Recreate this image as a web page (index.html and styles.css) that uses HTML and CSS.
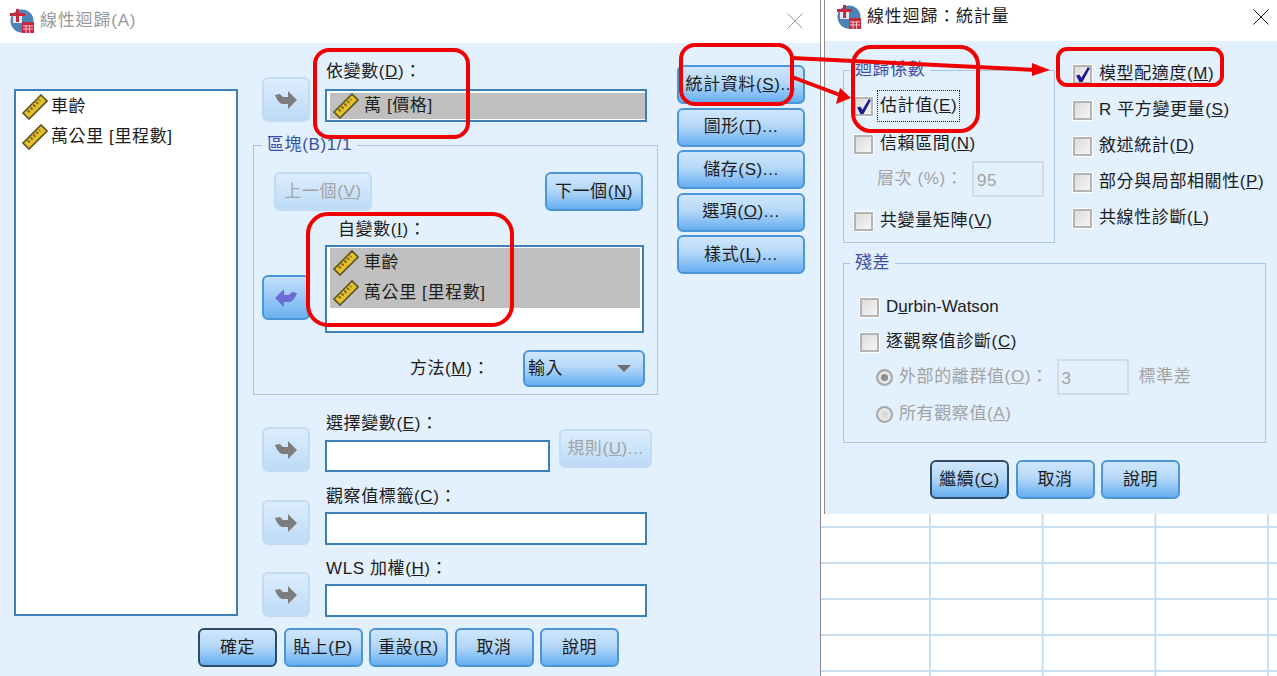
FILE: index.html
```html
<!DOCTYPE html>
<html lang="zh-Hant">
  <head>
    <meta charset="UTF-8" />
    <meta name="viewport" content="width=device-width, initial-scale=1.0" />
    <title>線性迴歸</title>
    <link rel="stylesheet" href="styles.css">
  </head>
  <body>
    <svg class="defs" aria-hidden="true">
      <symbol id="ruler" viewBox="0 0 26 26">
        <polygon points="1,19 19,1 25,7 7,25" fill="#e6c12e" stroke="#5c5220" stroke-width="1.6" />
        <line x1="6" y1="18" x2="18" y2="6" stroke="#7a6a1c" stroke-width="3" stroke-dasharray="2 2" />
      </symbol>
      <symbol id="arrow" viewBox="0 0 22 18">
        <path d="M0 4 L5 3 L8 6 H13 V0 L22 9 L13 18 V13 H7 Q3 12 0 4Z" />
      </symbol>
      <symbol id="logo" viewBox="0 0 24 24">
        <circle cx="12" cy="12" r="11.5" fill="#4a84b8" />
        <path d="M3 6 H12 V14 H3Z" fill="#dfe9f3" />
        <path d="M6 0 H9 V4 H15 V7 H9 V13 H6 V7 H0 V4 H6Z" fill="#c8283c" />
        <rect x="12" y="13" width="12" height="11" fill="#c8283c" />
        <path d="M13 17 H23 M13 20 H23 M16 16 V24 M19.500 16 V24" stroke="#f3c6c6" stroke-width="1" />
      </symbol>
      <symbol id="tick" viewBox="0 0 16 16">
        <path d="M2 9 L5 8 L7 11 L13 1 L15 2 L8 15 L5 15Z" fill="#1c1c94" />
      </symbol>
      <symbol id="cross" viewBox="0 0 16 16">
        <path d="M.5 .5 L15.500 15.500 M15.500 .5 L.5 15.500" stroke="currentColor" fill="none" />
      </symbol>
    </svg>

    <div class="page">
      <!-- main dialog -->
      <section class="dialog dialog_main">
        <header class="dialog__title dialog__title_muted">
          <svg class="logo"><use href="#logo" /></svg>
          <span class="dialog__name">線性迴歸(A)</span>
          <svg class="close close_muted"><use href="#cross" /></svg>
        </header>
        <div class="main">
          <ul class="varlist varlist_source">
            <li class="var"><svg class="ruler"><use href="#ruler" /></svg>車齡</li>
            <li class="var"><svg class="ruler"><use href="#ruler" /></svg>萬公里 [里程數]</li>
          </ul>

          <div class="main__center">
            <div class="var-row">
              <button class="btn btn_arrow btn_disabled" type="button"><svg class="arrow"><use href="#arrow" /></svg></button>
              <div>
                <div class="label">依變數(<u>D</u>)：</div>
                <div class="field field_dep">
                  <div class="var var_selected"><svg class="ruler"><use href="#ruler" /></svg>萬 [價格]</div>
                </div>
              </div>
            </div>

            <fieldset class="group group_block">
              <legend class="group__legend">區塊(B)1/1</legend>
              <div class="block-nav">
                <button class="btn btn_nav btn_disabled" type="button"><span>上一個(<u>V</u>)</span></button>
                <button class="btn btn_nav" type="button"><span>下一個(<u>N</u>)</span></button>
              </div>
              <div class="label label_indep">自變數(<u>I</u>)：</div>
              <div class="indep">
                <button class="btn btn_arrow btn_arrow-left" type="button"><svg class="arrow arrow_left"><use href="#arrow" /></svg></button>
                <ul class="varlist varlist_indep">
                  <li class="var var_selected"><svg class="ruler"><use href="#ruler" /></svg>車齡</li>
                  <li class="var var_selected"><svg class="ruler"><use href="#ruler" /></svg>萬公里 [里程數]</li>
                </ul>
              </div>
              <div class="method">
                <span>方法(<u>M</u>)：</span>
                <div class="btn select">輸入<i class="select__caret"></i></div>
              </div>
            </fieldset>

            <div class="var-row var-row_select">
              <button class="btn btn_arrow btn_disabled" type="button"><svg class="arrow"><use href="#arrow" /></svg></button>
              <div class="select-var">
                <div class="label">選擇變數(<u>E</u>)：</div>
                <div class="field field_short"></div>
                <button class="btn btn_rule btn_disabled" type="button"><span>規則(<u>U</u>)...</span></button>
              </div>
            </div>

            <div class="var-row var-row_case">
              <button class="btn btn_arrow btn_disabled" type="button"><svg class="arrow"><use href="#arrow" /></svg></button>
              <div>
                <div class="label">觀察值標籤(<u>C</u>)：</div>
                <div class="field"></div>
              </div>
            </div>

            <div class="var-row var-row_wls">
              <button class="btn btn_arrow btn_disabled" type="button"><svg class="arrow"><use href="#arrow" /></svg></button>
              <div>
                <div class="label">WLS 加權(<u>H</u>)：</div>
                <div class="field"></div>
              </div>
            </div>
          </div>

          <div class="main__side">
            <button class="btn btn_side" type="button"><span>統計資料(<u>S</u>)...</span></button>
            <button class="btn btn_side" type="button"><span>圖形(<u>T</u>)...</span></button>
            <button class="btn btn_side" type="button"><span>儲存(S)...</span></button>
            <button class="btn btn_side" type="button"><span>選項(<u>O</u>)...</span></button>
            <button class="btn btn_side" type="button"><span>樣式(<u>L</u>)...</span></button>
          </div>

          <div class="actions actions_main">
            <button class="btn btn_action btn_default" type="button">確定</button>
            <button class="btn btn_action" type="button"><span>貼上(<u>P</u>)</span></button>
            <button class="btn btn_action" type="button"><span>重設(<u>R</u>)</span></button>
            <button class="btn btn_action" type="button">取消</button>
            <button class="btn btn_action" type="button">說明</button>
          </div>
        </div>
      </section>

      <!-- statistics dialog + data sheet behind it -->
      <div class="side">
        <section class="dialog dialog_stats">
          <header class="dialog__title dialog__title_stats">
            <svg class="logo"><use href="#logo" /></svg>
            <span class="dialog__name">線性迴歸：統計量</span>
            <svg class="close"><use href="#cross" /></svg>
          </header>
          <div class="stats">
            <div class="stats__top">
              <fieldset class="group group_coef">
                <legend class="group__legend">迴歸係數</legend>
                <div class="check check_est">
                  <span class="box box_on"><svg class="tick"><use href="#tick" /></svg></span>
                  <span class="focus"><span>估計值(<u>E</u>)</span></span>
                </div>
                <div class="check check_ci"><span class="box"></span><span>信賴區間(<u>N</u>)</span></div>
                <div class="level">
                  <span>層次 (%)：</span>
                  <div class="num">95</div>
                </div>
                <div class="check check_cov"><span class="box"></span><span>共變量矩陣(<u>V</u>)</span></div>
              </fieldset>
              <div class="stats__list">
                <div class="check check_list"><span class="box box_on"><svg class="tick"><use href="#tick" /></svg></span><span>模型配適度(<u>M</u>)</span></div>
                <div class="check check_list"><span class="box"></span><span>R 平方變更量(<u>S</u>)</span></div>
                <div class="check check_list"><span class="box"></span><span>敘述統計(<u>D</u>)</span></div>
                <div class="check check_list"><span class="box"></span><span>部分與局部相關性(<u>P</u>)</span></div>
                <div class="check check_list"><span class="box"></span><span>共線性診斷(<u>L</u>)</span></div>
              </div>
            </div>

            <fieldset class="group group_resid">
              <legend class="group__legend">殘差</legend>
              <div class="check check_resid"><span class="box"></span><span class="latin">D<u>u</u>rbin-Watson</span></div>
              <div class="check check_resid check_case"><span class="box"></span><span>逐觀察值診斷(<u>C</u>)</span></div>
              <div class="radio-row">
                <span class="radio radio_on"></span>
                <span>外部的離群值(<u>O</u>)：</span>
                <div class="num num_sd">3</div>
                <span class="radio-row__unit">標準差</span>
              </div>
              <div class="radio-row radio-row_all">
                <span class="radio"></span>
                <span>所有觀察值(<u>A</u>)</span>
              </div>
            </fieldset>

            <div class="actions actions_stats">
              <button class="btn btn_action btn_default" type="button"><span>繼續(<u>C</u>)</span></button>
              <button class="btn btn_action" type="button">取消</button>
              <button class="btn btn_action" type="button">說明</button>
            </div>
          </div>
        </section>
        <div class="sheet"></div>
      </div>
    </div>

    <!-- red marks drawn on top of the screenshot -->
    <svg class="marks" viewBox="0 0 1277 676" aria-hidden="true">
      <g fill="none" stroke="#f00000" stroke-width="4">
        <rect x="315" y="50" width="153" height="87" rx="14" />
        <rect x="308" y="214" width="204" height="111" rx="20" />
        <rect x="681" y="45" width="111" height="59" rx="14" />
        <rect x="853" y="47" width="125" height="84" rx="18" />
        <rect x="1058" y="49" width="164" height="36" rx="9" />
        <path d="M792 58 L1036 70" />
        <path d="M792 77 L840 95" />
      </g>
      <path d="M1032 63 L1050 70 L1032 76Z" fill="#f00000" />
      <path d="M851 98 L836 104 L840 88Z" fill="#f00000" />
    </svg>
  </body>
</html>
```

FILE: styles.css
```css
:root {
  --bg: #e3f0fd;
  --line: #a9c6e0;
  --field: #3f7fb8;
  --muted: #a3a3a3;
}

* {
  box-sizing: border-box;
}

body {
  margin: 0;
  height: 676px;
  overflow: hidden;
  background: #fff;
  color: #1c1c1c;
  font: 17px/20px "Liberation Sans", "Noto Sans CJK TC", sans-serif;
  letter-spacing: 0.6px;
}

u {
  text-decoration: underline;
}

ul {
  list-style: none;
  margin: 0;
  padding: 0;
}

.defs {
  position: absolute;
  width: 0;
  height: 0;
}

.page {
  display: flex;
  height: 676px;
}

/* ===== title bars ===== */
.dialog_main {
  width: 820px;
  flex: none;
  display: flex;
  flex-direction: column;
}

.dialog__title {
  display: flex;
  align-items: center;
  background: #fff;
  flex: none;
  font-size: 17px;
  letter-spacing: 0.8px;
}

.dialog__title_muted {
  height: 43px;
  padding: 0 17px 2px 10px;
  color: #9a9a9a;
}

.dialog__title_stats {
  height: 41px;
  padding: 0 8px 7px 12px;
}

.dialog__name {
  flex: 1;
  margin-left: 6px;
}

.logo {
  width: 24px;
  height: 24px;
  flex: none;
}

.close {
  width: 16px;
  height: 16px;
  color: #111;
}

.close_muted {
  color: #999;
}

/* ===== buttons ===== */
.btn {
  display: flex;
  align-items: center;
  justify-content: center;
  padding: 0;
  font: inherit;
  letter-spacing: inherit;
  color: #1c1c1c;
  white-space: nowrap;
  border: 2px solid #4c96d8;
  border-radius: 6px;
  background: linear-gradient(#cfe6fc, #b5d8f9 45%, #66aef1);
}

.btn_disabled {
  color: var(--muted);
  border-color: #c3dcf3;
  background: linear-gradient(#dcedfd, #bcdbf7);
}

.btn_default {
  border-color: #2e4b66;
}

.btn_arrow {
  width: 48px;
  height: 45px;
}

.btn_arrow-left {
  margin-left: 8px;
  margin-bottom: 13px;
  background: linear-gradient(#c4e0fb, #6cb1f1);
}

.btn_nav {
  width: 98px;
  height: 39px;
}

.btn_side {
  width: 128px;
  height: 39px;
}

.btn_rule {
  grid-column: 2;
  grid-row: 1 / 3;
  align-self: end;
  width: 93px;
  height: 39px;
  margin-bottom: 4px;
}

.btn_action {
  width: 79px;
  height: 39px;
}

.arrow {
  width: 22px;
  height: 18px;
  fill: #7d7d7d;
}

.arrow_left {
  fill: #6a6bd6;
  transform: scaleX(-1);
}

/* ===== main dialog ===== */
.main {
  flex: 1;
  display: grid;
  grid-template-columns: 224px 405px 128px;
  grid-template-rows: 585px 39px;
  column-gap: 15px;
  padding-left: 14px;
  background: var(--bg);
}

.main__center {
  padding-top: 19px;
}

.main__side {
  display: flex;
  flex-direction: column;
  gap: 3.5px;
  margin: 22px 0 0 4px;
}

.varlist {
  background: #fff;
  border: 2px solid var(--field);
}

.varlist_source {
  margin-top: 46px;
  height: 527px;
  padding: 1px 0 0 5px;
}

.varlist_indep {
  flex: 1;
  height: 88px;
  padding: 1px 2px 0 3px;
}

.var {
  display: flex;
  align-items: center;
  height: 30px;
  white-space: pre;
}

.var_selected {
  background: #c0c0c0;
}

.ruler {
  width: 26px;
  height: 26px;
  flex: none;
  margin: 0 3px 0 1px;
}

.var_selected .ruler {
  margin: 0 5px 0 3px;
}

.var-row {
  display: grid;
  grid-template-columns: 48px 322px;
  column-gap: 15px;
  align-items: end;
  padding-left: 9px;
}

.var-row_select {
  margin-top: 19px;
}

.var-row_case {
  margin-top: 15px;
}

.var-row_wls {
  margin-top: 14px;
}

.label {
  margin-bottom: 5px;
  padding-left: 1px;
  white-space: nowrap;
}

.var-row:first-child .label {
  margin-bottom: 7px;
}

.field {
  height: 33px;
  background: #fff;
  border: 2px solid var(--field);
}

.field_dep {
  padding: 2px 0 0 3px;
}

.field_dep .var {
  height: 26px;
}

.field_short {
  grid-column: 1;
  height: 32px;
}

.select-var {
  display: grid;
  grid-template-columns: 225px 93px;
  column-gap: 9px;
}

.select-var .label {
  grid-column: 1;
  margin-bottom: 6px;
}

/* ===== group boxes ===== */
.group {
  min-width: 0;
  margin: 0;
  padding: 0;
  border: 1px solid var(--line);
}

.group__legend {
  padding: 0 5px;
  line-height: 16px;
  color: #3b4ea6;
}

.group_block {
  margin-top: 15px;
  padding-bottom: 7px;
}

.group_block .group__legend {
  margin-left: 8px;
}

.block-nav {
  display: flex;
  justify-content: space-between;
  margin: 19px 14px 0 20px;
}

.label_indep {
  margin: 9px 0 5px 83px;
}

.indep {
  display: flex;
  align-items: flex-end;
  gap: 15px;
  margin-right: 13px;
}

.method {
  display: flex;
  align-items: center;
  justify-content: flex-end;
  gap: 33px;
  margin: 17px 12px 0 0;
}

.select {
  justify-content: space-between;
  width: 122px;
  height: 37px;
  padding: 0 12px 0 3px;
}

.select__caret {
  border-top: 7px solid #6e6e6e;
  border-left: 7px solid transparent;
  border-right: 7px solid transparent;
}

/* ===== actions ===== */
.actions {
  display: flex;
  gap: 6.5px;
}

.actions_main {
  grid-column: 1 / -1;
  margin-left: 184px;
}

.actions_stats {
  margin: 17px 0 0 87px;
}

/* ===== statistics dialog ===== */
.side {
  flex: 1;
  display: flex;
  flex-direction: column;
  border-left: 1px solid #8c8c8c;
}

.dialog_stats {
  margin-left: 3px;
  border-left: 1px solid #8c8c8c;
  flex: none;
}

.stats {
  height: 473px;
  padding-left: 18px;
  background: var(--bg);
}

.stats__top {
  display: flex;
  gap: 18px;
}

.group_coef {
  width: 212px;
  height: 181px;
  margin-top: 21px;
  padding: 12px 0 0 10px;
}

.group_coef .group__legend {
  margin-left: -4px;
}

.group_resid .group__legend {
  margin-left: -10px;
}

.stats__list {
  padding-top: 15px;
}

.check {
  display: flex;
  align-items: center;
  gap: 7px;
  height: 30px;
  white-space: nowrap;
}

.check_est {
  height: 32px;
  gap: 4px;
}

.check_ci {
  margin-top: 7px;
}

.check_cov {
  margin-top: 9px;
}

.check_list {
  height: 36px;
}

.latin {
  letter-spacing: 0;
}

.focus {
  display: flex;
  align-items: center;
  height: 32px;
  padding: 0 2px;
  border: 1px dotted #222;
}

.box {
  display: flex;
  align-items: center;
  justify-content: center;
  width: 19px;
  height: 19px;
  flex: none;
  background: linear-gradient(135deg, #dcdcdc, #f6f6f6);
  border: 2px solid #b4b4b4;
  box-shadow: 0 0 0 1px #fff;
}

.tick {
  width: 17px;
  height: 17px;
  flex: none;
}

.level {
  display: flex;
  align-items: center;
  justify-content: space-between;
  width: 167px;
  height: 36px;
  margin: 2px 0 0 23px;
  color: var(--muted);
}

.num {
  width: 72px;
  height: 36px;
  padding: 8px 0 0 3px;
  color: var(--muted);
  border: 2px solid #d4dce3;
}

.group_resid {
  width: 423px;
  height: 188px;
  margin-top: 12px;
  padding: 21px 0 0 16px;
}

.check_case {
  margin-top: 5px;
}

.radio-row {
  display: flex;
  align-items: center;
  height: 36px;
  margin: 2px 0 0 16px;
  gap: 6px;
  color: var(--muted);
}

.radio-row_all {
  height: 30px;
  margin-top: 4px;
}

.radio-row__unit {
  margin-left: 4px;
}

.num_sd {
  margin-left: 2px;
}

.radio {
  width: 17px;
  height: 17px;
  flex: none;
  border-radius: 50%;
  border: 2px solid #a8a8a8;
  background: #dcdcdc;
  box-shadow: inset 0 0 0 3px #e8e8e8;
}

.radio_on {
  background: #8f8f8f;
}

/* ===== sheet behind the dialog ===== */
.sheet {
  flex: 1;
  background-color: #fff;
  background-image:
    linear-gradient(90deg, transparent calc(100% - 2px), #c9deef 0),
    linear-gradient(transparent calc(100% - 2px), #c9deef 0);
  background-size: 112.7px 36px;
  background-position: -2.7px -22px;
}

/* ===== red annotations ===== */
.marks {
  position: absolute;
  left: 0;
  top: 0;
  width: 1277px;
  height: 676px;
  pointer-events: none;
}
```
